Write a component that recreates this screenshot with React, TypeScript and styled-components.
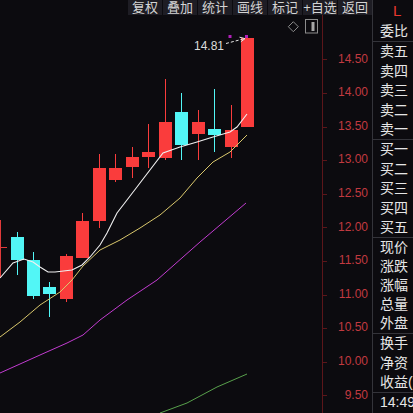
import styled, { createGlobalStyle } from 'styled-components';

const GlobalStyle = createGlobalStyle`
  html, body {
    margin: 0;
    padding: 0;
    background: #0c0b0f;
  }
  body {
    font-family: "Liberation Sans", "Noto Sans CJK SC", sans-serif;
  }
`;

type Candle = [number, number, number, number, number, boolean];

// x, body top, body bottom, wick top, wick bottom, rising
const candles: Candle[] = [
  [11, 237, 260, 232, 275, false],
  [27, 260, 296, 252, 299, false],
  [43, 287, 294, 282, 317, false],
  [60, 256, 299, 254, 302, true],
  [76, 221, 258, 213, 258, true],
  [93, 168, 221, 154, 228, true],
  [109, 168, 180, 154, 182, true],
  [126, 157, 167, 147, 178, true],
  [142, 152, 157, 124, 168, true],
  [159, 122, 158, 79, 160, true],
  [175, 112, 145, 93, 160, false],
  [192, 122, 134, 110, 160, true],
  [208, 129, 135, 89, 152, false],
  [225, 130, 147, 105, 158, true],
  [241, 38, 127, 38, 127, true],
];

const ma5 =
  '0,278 13,263 24,259 33,262 40,267 48,272 55,272 72,270 82,265 90,257 100,245 107,233 117,213 127,200 140,183 163,153 180,147 197,142 213,137 230,132 237,127 247,114';
const ma10 =
  '0,337 20,322 40,305 60,292 72,280 83,266 100,250 120,240 140,228 160,215 180,198 197,178 213,162 230,152 247,135';
const ma20 = '0,373 40,355 67,343 83,335 100,320 127,300 157,280 200,242 246,203';
const ma60 = '160,413 187,403 217,387 247,374';

const tabs = ['复权', '叠加', '统计', '画线', '标记', '+自选', '返回'];
const prices = ['14.50', '14.00', '13.50', '13.00', '12.50', '12.00', '11.50', '11.00', '10.50', '10.00', '9.50'];

const sections: { rows: string[]; compact?: boolean }[] = [
  { rows: ['卖五', '卖四', '卖三', '卖二', '卖一'] },
  { rows: ['买一', '买二', '买三', '买四', '买五'] },
  { rows: ['现价', '涨跌', '涨幅', '总量', '外盘'], compact: true },
  { rows: ['换手', '净资', '收益(动'] },
  { rows: ['14:49:58'] },
];

export default function App() {
  return (
    <>
      <GlobalStyle />
      <Screen>
        <Main>
          <Toolbar>
            {tabs.map((t) => (
              <Tab key={t}>{t}</Tab>
            ))}
          </Toolbar>
          <ChartArea>
            <ChartCanvas viewBox="0 15 322 398">
              <rect x="0" y="220" width="1" height="58" fill="#e03a3a" />
              <rect x="0" y="247" width="7" height="1" fill="#e03a3a" />
              {candles.map(([x, bt, bb, wt, wb, up]) => {
                const c = up ? '#fa3c3c' : '#52f6f6';
                return (
                  <g key={x}>
                    <rect x={x + 6} y={wt} width="1" height={wb - wt} fill={c} />
                    <rect x={x} y={bt} width="13" height={Math.max(bb - bt, 1)} fill={c} />
                  </g>
                );
              })}
              <polyline points={ma60} fill="none" stroke="#58a04c" strokeWidth="1" />
              <polyline points={ma20} fill="none" stroke="#c23cd0" strokeWidth="1" />
              <polyline points={ma10} fill="none" stroke="#d9c76c" strokeWidth="1" />
              <polyline points={ma5} fill="none" stroke="#f0f0f0" strokeWidth="1.1" />

              <text x="224" y="50" textAnchor="end" fill="#dcdcdc" fontSize="12" fontFamily="Liberation Sans, sans-serif">
                14.81
              </text>
              <line x1="226" y1="43.5" x2="243" y2="39" stroke="#e8e8e8" strokeWidth="1" strokeDasharray="3 2" />
              <path d="M239.5 37.2 L245 38.6 L240.8 41.8" fill="none" stroke="#e8e8e8" strokeWidth="1" />
              <rect x="228.5" y="35" width="3" height="3" fill="#b021b8" />
              <rect x="245" y="35" width="3" height="3" fill="#b021b8" />

              <path d="M293.3 21.7 L298.3 26.7 L293.3 31.7 L288.3 26.7 Z" fill="none" stroke="#8c8c8c" strokeWidth="1" />
              <rect x="305.5" y="19.5" width="12" height="13.5" fill="none" stroke="#8c8c8c" strokeWidth="1" />
              <rect x="311.5" y="22" width="3" height="9" fill="#a8a8a8" />
            </ChartCanvas>
            <Axis>
              {prices.map((p) => (
                <PriceLabel key={p}>{p}</PriceLabel>
              ))}
            </Axis>
          </ChartArea>
        </Main>
        <Side>
          <SideHeader>L</SideHeader>
          <Row>委比</Row>
          {sections.map((s, i) => (
            <Section key={i}>
              {s.rows.map((r) => (
                <Row key={r} $compact={s.compact}>
                  {r}
                </Row>
              ))}
            </Section>
          ))}
        </Side>
      </Screen>
    </>
  );
}

const Screen = styled.div`
  display: flex;
  width: 413px;
  height: 413px;
  overflow: hidden;
  background: #0c0b0f;
`;

const Main = styled.div`
  display: flex;
  flex-direction: column;
  width: 372px;
  flex-shrink: 0;
`;

const Toolbar = styled.div`
  display: flex;
  justify-content: flex-end;
  height: 15px;
  flex-shrink: 0;
`;

const Tab = styled.div`
  width: 34px;
  border-left: 1px solid #0c0b0f;
  background: #1e1d24;
  color: #d4d4d4;
  font-size: 13px;
  line-height: 15px;
  text-align: center;
  white-space: nowrap;
  overflow: hidden;
`;

const ChartArea = styled.div`
  display: flex;
  flex: 1;
`;

const ChartCanvas = styled.svg`
  display: block;
  width: 322px;
  height: 398px;
  flex-shrink: 0;
`;

const Axis = styled.div`
  display: flex;
  flex-direction: column;
  width: 49px;
  border-left: 1px solid #5c161a;
  padding-top: 27.7px;
`;

const PriceLabel = styled.div`
  position: relative;
  height: 33.6px;
  line-height: 33.6px;
  padding-right: 4px;
  text-align: right;
  color: #c23a40;
  font-size: 12px;

  &::before {
    content: '';
    position: absolute;
    left: 0;
    top: 50%;
    width: 4px;
    height: 1px;
    background: #5c161a;
  }
`;

const Side = styled.div`
  display: flex;
  flex-direction: column;
  width: 40px;
  border-left: 1px solid #34343a;
  overflow: hidden;
`;

const SideHeader = styled.div`
  height: 22px;
  padding-left: 20px;
  color: #e8382e;
  font-size: 15px;
  line-height: 21px;
`;

const Section = styled.div`
  border-top: 1px solid #34343a;
`;

const Row = styled.div<{ $compact?: boolean }>`
  height: ${(p) => (p.$compact ? 19 : 19.4)}px;
  line-height: ${(p) => (p.$compact ? 19 : 19.4)}px;
  padding-left: 7px;
  color: #e6e6e6;
  font-size: 14px;
  white-space: nowrap;
  overflow: hidden;
`;
